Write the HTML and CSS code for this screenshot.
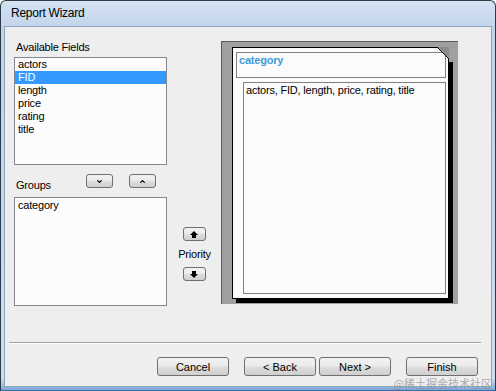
FILE: index.html
```html
<!DOCTYPE html>
<html lang="en">
<head>
  <meta charset="UTF-8">
  <title>Report Wizard</title>
  <link rel="stylesheet" href="styles.css">
</head>
<body>
  <div class="window">
    <div class="titlebar">Report Wizard</div>
    <div class="client">
      <div class="main">
        <div class="fields-col">
          <div class="label first">Available Fields</div>
          <ul class="listbox fields">
            <li>actors</li>
            <li class="selected">FID</li>
            <li>length</li>
            <li>price</li>
            <li>rating</li>
            <li>title</li>
          </ul>
          <div class="groups-row">
            <div class="label groups-label">Groups</div>
            <button class="btn small-btn">
              <svg width="5" height="3" viewBox="0 0 5 3"><path d="M0.3 0.3 L2.5 2.5 L4.7 0.3" fill="none" stroke="#000" stroke-width="1.1"/></svg>
            </button>
            <button class="btn small-btn">
              <svg width="5" height="3" viewBox="0 0 5 3"><path d="M0.3 2.7 L2.5 0.5 L4.7 2.7" fill="none" stroke="#000" stroke-width="1.1"/></svg>
            </button>
          </div>
          <ul class="listbox groups">
            <li>category</li>
          </ul>
        </div>

        <div class="priority-col">
          <button class="btn prio-btn">
            <svg width="8" height="7" viewBox="0 0 8 7"><path d="M4 0 L8 4 H6 V7 H2 V4 H0 Z"/></svg>
          </button>
          <div class="prio-label">Priority</div>
          <button class="btn prio-btn">
            <svg width="8" height="7" viewBox="0 0 8 7"><path d="M4 7 L8 3 H6 V0 H2 V3 H0 Z"/></svg>
          </button>
        </div>

        <div class="preview">
          <div class="page">
            <svg class="fold" width="16" height="16" viewBox="0 0 16 16">
              <rect x="11" y="0" width="5" height="15" fill="#a0a0a0"/>
              <polygon points="0.5,0 12,0 12,11.5" fill="#8c8c8c"/>
              <line x1="0.5" y1="0.5" x2="11.5" y2="11.5" stroke="#000" stroke-width="1"/>
              <line x1="11.5" y1="11.5" x2="11.5" y2="16" stroke="#000" stroke-width="1"/>
            </svg>
            <div class="group-header">category</div>
            <div class="detail">actors, FID, length, price, rating, title</div>
          </div>
        </div>
      </div>

      <div class="separator"></div>

      <div class="footer">
        <button class="btn push-btn gap-wide">Cancel</button>
        <button class="btn push-btn gap-narrow">&lt; Back</button>
        <button class="btn push-btn gap-wide">Next &gt;</button>
        <button class="btn push-btn">Finish</button>
      </div>
    </div>
    <div class="watermark">@稀土掘金技术社区</div>
  </div>
</body>
</html>
```

FILE: styles.css
```css
* {
  box-sizing: border-box;
}
body {
  margin: 0;
  font-family: "Liberation Sans", Arial, sans-serif;
  font-size: 11px;
  letter-spacing: -0.2px;
  color: #000;
}
.window {
  position: relative;
  width: 496px;
  height: 391px;
  display: flex;
  flex-direction: column;
  padding: 0 3px 3px;
  border: 1px solid #2e3a48;
  border-bottom-color: #3f6fa8;
  border-radius: 6px 6px 0 0;
  background: linear-gradient(#d4e2f2, #c0d3ea 8%, #c6d8ed 60%, #cfdff1 97%, #7aa7d8);
}
.titlebar {
  height: 25px;
  line-height: 25px;
  padding-left: 7px;
  font-size: 12px;
  letter-spacing: -0.25px;
}
.client {
  flex: 1;
  display: flex;
  flex-direction: column;
  background: #eeeeee;
  border: 1px solid #8ea3bd;
}
.main {
  display: flex;
  padding: 14px 0 0 9px;
}
.fields-col {
  width: 153px;
}
.label {
  height: 13px;
  line-height: 13px;
  padding-left: 2px;
}
.label.first {
  margin-bottom: 3px;
}
.listbox {
  list-style: none;
  margin: 0;
  padding: 0;
  background: #fcfcfc;
  border: 1px solid #828790;
}
.listbox li {
  height: 13px;
  line-height: 13px;
  padding-left: 3px;
}
.listbox li.selected {
  background: #3399ff;
  color: #fff;
}
.fields {
  height: 108px;
}
.groups {
  height: 109px;
  padding-top: 1px;
}
.groups-row {
  display: flex;
  align-items: flex-start;
  height: 23px;
  margin-top: 9px;
}
.groups-label {
  width: 72px;
  margin-top: 5px;
}
.btn {
  display: flex;
  align-items: center;
  justify-content: center;
  padding: 0;
  font: inherit;
  color: #000;
  border: 1px solid #707070;
  border-radius: 3px;
  background: linear-gradient(#f2f2f2, #ebebeb 45%, #dddddd 55%, #cfcfcf);
}
.small-btn {
  width: 27px;
  height: 14px;
}
.small-btn + .small-btn {
  margin-left: 16px;
}
.priority-col {
  width: 54px;
  display: flex;
  flex-direction: column;
  align-items: center;
  padding-top: 186px;
}
.prio-btn {
  width: 23px;
  height: 14px;
}
.prio-label {
  line-height: 13px;
  margin: 7px 0 6px 1px;
}
.preview {
  width: 237px;
  height: 263px;
  padding: 5px 0 0 10px;
  background: #a0a0a0;
  border-top: 1px solid #5c5c5c;
  border-left: 1px solid #5c5c5c;
}
.page {
  position: relative;
  width: 217px;
  height: 252px;
  padding: 4px 2px 0 3px;
  background: #fbfbfb;
  border: 1px solid #000;
  box-shadow: 4px 4px 0 #000;
}
.fold {
  position: absolute;
  top: -1px;
  right: -5px;
}
.group-header {
  height: 26px;
  padding: 1px 0 0 2px;
  border: 1px solid #808080;
  font-weight: bold;
  color: #3d9ad8;
}
.detail {
  height: 212px;
  margin: 4px 0 0 7px;
  padding: 1px 0 0 2px;
  border: 1px solid #808080;
}
.separator {
  margin: 36px 10px 0 4px;
  border-top: 1px solid #a0a0a0;
  border-bottom: 1px solid #ffffff;
}
.footer {
  display: flex;
  justify-content: flex-end;
  margin-top: 13px;
  padding-right: 13px;
}
.push-btn {
  width: 72px;
  height: 19px;
}
.gap-wide {
  margin-right: 15px;
}
.gap-narrow {
  margin-right: 3px;
}
.watermark {
  position: absolute;
  right: 3px;
  bottom: 0;
  font-family: "Noto Sans CJK SC", sans-serif;
  font-size: 11px;
  letter-spacing: 0;
  line-height: 14px;
  color: rgba(140, 140, 140, 0.7);
}
```
